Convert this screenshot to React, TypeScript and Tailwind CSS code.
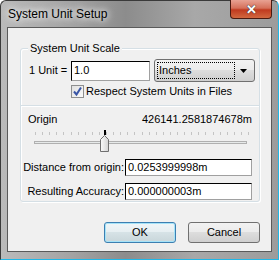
import React from 'react';

const font = { fontFamily: '"Liberation Sans", Arial, sans-serif' };

function TickSlider() {
  const ticks = Array.from({ length: 31 }, (_, i) => 14 + i * 7.1);
  return (
    <svg width="240" height="26" className="block">
      {ticks.map((x, i) => (
        <rect key={i} x={Math.round(x)} y={2} width={1} height={3} fill="#c4c4c4" />
      ))}
      <rect x={83} y={0} width={2} height={5} fill="#000" />
      <rect x={13.5} y={11.5} width={212} height={2} fill="#e7eaea" stroke="#b0b0b0" strokeWidth={1} />
      <defs>
        <linearGradient id="thumb" x1="0" y1="0" x2="1" y2="0">
          <stop offset="0" stopColor="#fbfbfb" />
          <stop offset="1" stopColor="#d4d4d4" />
        </linearGradient>
      </defs>
      <path d="M79.5 9.5 L83.5 5.5 L87.5 9.5 L87.5 21.5 L79.5 21.5 Z" fill="url(#thumb)" stroke="#707070" />
    </svg>
  );
}

function TextBox({ value, w, h }: { value: string; w: string; h: string }) {
  return (
    <div className={`${w} ${h} bg-white border border-t-black border-l-black border-r-[#a0a0a0] border-b-[#a0a0a0] flex items-center pl-[2px] text-[11px] leading-none text-black whitespace-nowrap overflow-hidden`}>
      {value}
    </div>
  );
}

export default function App() {
  return (
    <div style={font} className="w-[279px] h-[260px] relative overflow-hidden bg-white">
      <div className="w-[279px] h-[260px] rounded-t-[6px] border border-[#3a3a3a] border-b-[#20b8e8] border-r-[#20b8e8] bg-[linear-gradient(90deg,#bababa_0%,#a4a4a4_25%,#8c8c8c_45%,#a8a8a8_70%,#9c9c9c_100%)] flex flex-col">
        {/* title bar */}
        <div className="h-[26px] flex items-center pl-[7px]">
          <span className="text-[12px] text-black [text-shadow:0_0_6px_#fff,0_0_10px_#fff]">System Unit Setup</span>
        </div>
        {/* close button */}
        <div className="absolute top-0 left-[230px] w-[42px] h-[19px] rounded-b-[4px] border border-[#4a1a10] border-t-0 bg-[linear-gradient(180deg,#e8a293_0%,#d5705a_45%,#c03a1f_55%,#d2683f_100%)] flex items-center justify-center">
          <span className="text-white text-[13px] font-bold leading-none [text-shadow:0_0_1px_#333,0_0_1px_#333]">✕</span>
        </div>
        {/* client area */}
        <div className="mx-[6px] h-[225px] border border-[#5a5a5a] bg-[#f0f0f0] flex flex-col pt-[20px] pl-[12px]">
          {/* group box */}
          <div className="relative w-[240px] h-[154px] border border-[#d5dfe5] rounded-[3px] shadow-[inset_1px_1px_0_#fff,1px_1px_0_#fff] flex flex-col">
            <span className="absolute left-[7px] -top-[9px] px-[2px] bg-[#f0f0f0] text-[11px] leading-[16px] text-black">System Unit Scale</span>
            <div className="mt-[10px] h-[23px] flex items-center">
              <span className="ml-[8px] w-[42px] text-[11px] text-black whitespace-nowrap">1 Unit =</span>
              <TextBox value="1.0" w="w-[79px]" h="h-[20px]" />
              <div className="ml-[4px] w-[101px] h-[23px] rounded-[3px] border border-[#707070] bg-[linear-gradient(180deg,#f2f2f2_0%,#ebebeb_50%,#dddddd_50%,#cfcfcf_100%)] flex items-center p-[2px]">
                <div className="flex-1 h-[17px] border border-dotted border-black flex items-center pl-[1px] text-[11px] text-black leading-none">Inches</div>
                <svg width="17" height="17" className="block">
                  <path d="M5 7 L12 7 L8.5 11 Z" fill="#000" />
                </svg>
              </div>
            </div>
            <div className="mt-[3px] ml-[50px] h-[13px] flex items-center">
              <div className="w-[13px] h-[13px] border border-[#8e8f8f] bg-[linear-gradient(135deg,#e0e0e0,#fafafa)] flex items-center justify-center">
                <svg width="11" height="11" className="block">
                  <path d="M2 5.5 L4.5 8.5 L9 1.5" fill="none" stroke="#3a56a6" strokeWidth={2} />
                </svg>
              </div>
              <span className="ml-[2px] text-[11px] text-black whitespace-nowrap">Respect System Units in Files</span>
            </div>
            <div className="mt-[7px] h-px bg-[#d5dfe5] shadow-[0_1px_0_#fff]" />
            <div className="mt-[6px] h-[14px] flex items-center justify-between pl-[7px] pr-[7px]">
              <span className="text-[11px] text-black">Origin</span>
              <span className="text-[11px] text-black">426141.2581874678m</span>
            </div>
            <div className="mt-[4px]">
              <TickSlider />
            </div>
            <div className="mt-[3px] flex items-center h-[17px]">
              <span className="w-[103px] text-right text-[11px] text-black whitespace-nowrap">Distance from origin:</span>
              <div className="ml-[1px]">
                <TextBox value="0.0253999998m" w="w-[127px]" h="h-[17px]" />
              </div>
            </div>
            <div className="mt-[7px] flex items-center h-[17px]">
              <span className="w-[103px] text-right text-[11px] text-black whitespace-nowrap">Resulting Accuracy:</span>
              <div className="ml-[1px]">
                <TextBox value="0.000000003m" w="w-[127px]" h="h-[17px]" />
              </div>
            </div>
          </div>
          {/* buttons */}
          <div className="mt-[20px] flex gap-[12px] pl-[84px]">
            <div className="w-[72px] h-[21px] rounded-[3px] border border-[#3c7fb1] shadow-[inset_0_0_0_1px_#a6e3f8] bg-[linear-gradient(180deg,#f0f6f8_0%,#e6eef1_50%,#d6e2e6_50%,#c9d6da_100%)] flex items-center justify-center text-[11px] text-black">OK</div>
            <div className="w-[72px] h-[21px] rounded-[3px] border border-[#707070] bg-[linear-gradient(180deg,#f2f2f2_0%,#ebebeb_50%,#dddddd_50%,#cfcfcf_100%)] flex items-center justify-center text-[11px] text-black">Cancel</div>
          </div>
        </div>
      </div>
    </div>
  );
}
